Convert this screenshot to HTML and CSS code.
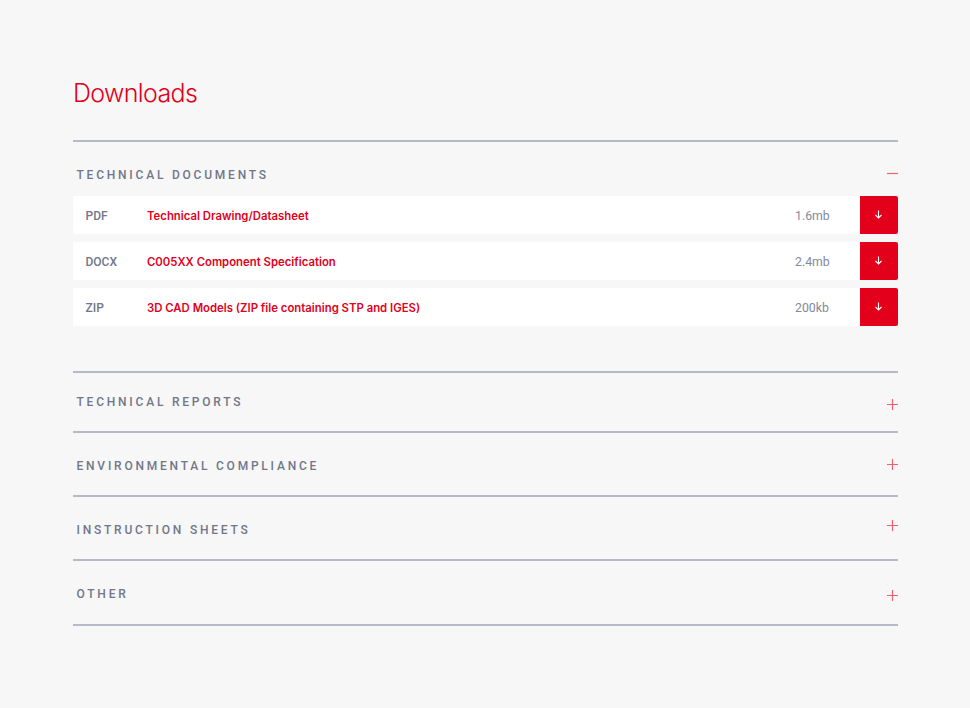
FILE: index.html
```html
<!DOCTYPE html>
<html lang="en">
<head>
<meta charset="utf-8">
<title>Downloads</title>
<link rel="stylesheet" href="styles.css">
</head>
<body>
<main class="page">
  <h1 class="title">Downloads</h1>
  <section class="group group-open">
    <div class="group-head">
      <h2 class="group-title">TECHNICAL DOCUMENTS</h2>
      <svg class="toggle" viewBox="0 0 11 11"><path d="M0 5.5h11"/></svg>
    </div>
    <ul class="files">
      <li class="file"><span class="type">PDF</span><a class="name" href="#">Technical Drawing/Datasheet</a><span class="size">1.6mb</span><a class="get" href="#" aria-label="Download"><svg viewBox="0 0 9 9"><path d="M4.5 0.5v7.5M1.5 5l3 3 3-3"/></svg></a></li>
      <li class="file"><span class="type">DOCX</span><a class="name" href="#">C005XX Component Specification</a><span class="size">2.4mb</span><a class="get" href="#" aria-label="Download"><svg viewBox="0 0 9 9"><path d="M4.5 0.5v7.5M1.5 5l3 3 3-3"/></svg></a></li>
      <li class="file"><span class="type">ZIP</span><a class="name" href="#">3D CAD Models (ZIP file containing STP and IGES)</a><span class="size">200kb</span><a class="get" href="#" aria-label="Download"><svg viewBox="0 0 9 9"><path d="M4.5 0.5v7.5M1.5 5l3 3 3-3"/></svg></a></li>
    </ul>
  </section>
  <section class="group group-first">
    <div class="group-head">
      <h2 class="group-title">TECHNICAL REPORTS</h2>
      <svg class="toggle" viewBox="0 0 11 11"><path d="M0 5.5h11M5.5 0v11"/></svg>
    </div>
  </section>
  <section class="group">
    <div class="group-head">
      <h2 class="group-title">ENVIRONMENTAL COMPLIANCE</h2>
      <svg class="toggle" viewBox="0 0 11 11"><path d="M0 5.5h11M5.5 0v11"/></svg>
    </div>
  </section>
  <section class="group">
    <div class="group-head">
      <h2 class="group-title">INSTRUCTION SHEETS</h2>
      <svg class="toggle toggle-high" viewBox="0 0 11 11"><path d="M0 5.5h11M5.5 0v11"/></svg>
    </div>
  </section>
  <section class="group group-last">
    <div class="group-head">
      <h2 class="group-title">OTHER</h2>
      <svg class="toggle toggle-low" viewBox="0 0 11 11"><path d="M0 5.5h11M5.5 0v11"/></svg>
    </div>
  </section>
</main>
</body>
</html>
```

FILE: styles.css
```css
* { box-sizing: border-box; }
html, body { margin: 0; padding: 0; }
body {
  background: #f7f7f7;
  font-family: "Inter", "Liberation Sans", sans-serif;
  height: 708px;
  overflow: hidden;
}
.page { width: 824.5px; margin-left: 73px; padding-top: 78px; }
.title {
  margin: 0 0 31px;
  height: 31px;
  font-family: "Inter", "Roboto", sans-serif;
  font-weight: 300;
  font-size: 25px;
  line-height: 31px;
  letter-spacing: -0.65px;
  color: #e2001a;
}
.group { border-top: 2px solid #b7b9c9; height: 64px; }
.group-open { height: 231px; }
.group-first { height: 60px; }
.group-last { height: 67px; border-bottom: 2px solid #b7b9c9; }
.group-head {
  display: flex;
  justify-content: space-between;
  align-items: flex-start;
  height: 54px;
  padding-left: 3.5px;
}
.group-title {
  margin: 25.5px 0 0;
  font-family: "Roboto", "Liberation Sans", sans-serif;
  font-size: 12px;
  line-height: 14px;
  font-weight: 500;
  letter-spacing: 2.78px;
  color: #71768a;
}
.group-open .group-title { margin-top: 26px; }
.group-first .group-title { margin-top: 22px; }
.toggle {
  flex: none;
  width: 11px;
  height: 11px;
  margin-top: 25.5px;
  color: #f0606f;
  fill: none;
  stroke: currentColor;
  stroke-width: 1.2;
}
.toggle-high { margin-top: 23px; }
.toggle-low { margin-top: 29px; }
.files { list-style: none; margin: 0; padding: 0; display: flex; flex-direction: column; gap: 8.5px; }
.file {
  display: flex;
  align-items: center;
  height: 37.5px;
  background: #fff;
  border-radius: 2px;
  font-size: 11.35px;
}
.type { width: 74px; padding: 2px 0 0 12.5px; font-family: "Roboto", sans-serif; font-size: 12px; font-weight: 500; color: #71768a; }
.name { flex: 1; padding-top: 2px; font-weight: 600; color: #e2001a; text-decoration: none; }
.size { width: 65px; padding-top: 2px; font-family: "Roboto", sans-serif; font-size: 12.3px; color: #85899b; }
.get {
  width: 37.5px;
  height: 37.5px;
  display: flex;
  align-items: center;
  justify-content: center;
  background: #e2001a;
  border-radius: 0 2px 2px 0;
}
.get svg { width: 9px; height: 9px; fill: none; stroke: #fff; stroke-width: 1.1; }
```
